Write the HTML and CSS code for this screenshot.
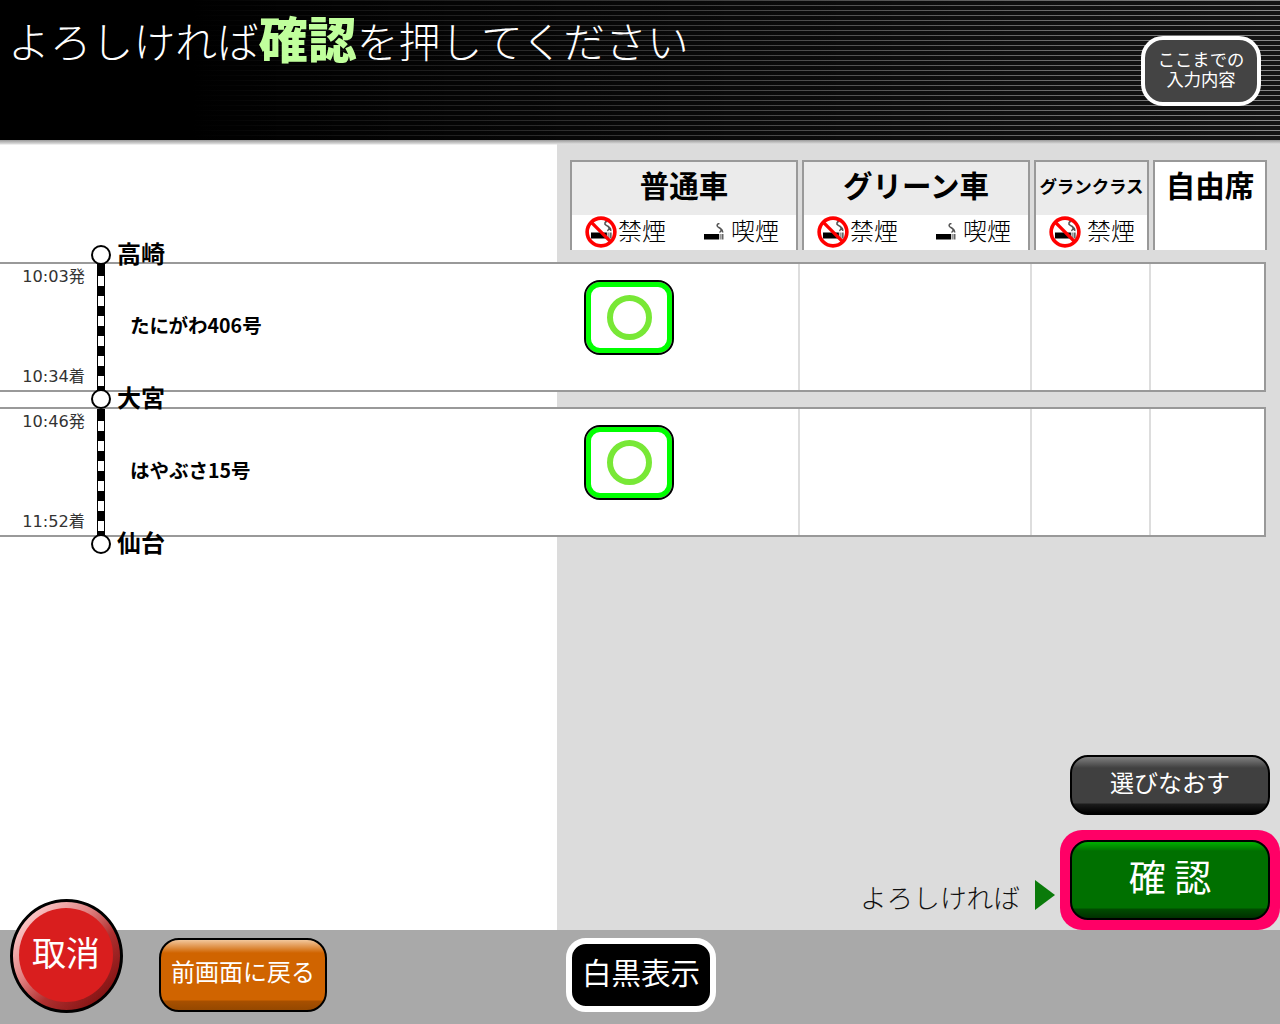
FILE: index.html
```html
<!DOCTYPE html>
<html lang="ja">
<head>
<meta charset="utf-8">
<title>確認</title>
<link rel="stylesheet" href="styles.css">
</head>
<body>
<svg class="defs" width="0" height="0" aria-hidden="true">
  <symbol id="cig" viewBox="0 0 20 18">
    <path d="M0 11h15v5.500H0z" fill="#000"/>
    <path d="M15.500 11h1.500v5.500h-1.500z" fill="#999"/>
    <path d="M17.500 11h2v5.500h-2z" fill="#666"/>
    <path d="M15.500 9.500c3-2.500 1.500-4-1-5.200-2.300-1.200-1.500-3.800 1-3.800M18.500 9.500c.8-2.500-1.500-3.500-3-4.800" fill="none" stroke="#555" stroke-width="1.500"/>
  </symbol>
  <symbol id="nosmoke" viewBox="0 0 30 30">
    <use href="#cig" x="5.500" y="4.500" width="20" height="18"/>
    <circle cx="15" cy="15" r="13" fill="none" stroke="#f00" stroke-width="3.400"/>
    <path d="M6 6l18 18" stroke="#f00" stroke-width="3.200"/>
  </symbol>
</svg>
<div class="page">
  <header class="top">
    <h1 class="title">よろしければ<b>確認</b>を押してください</h1>
    <button class="summary">ここまでの<br>入力内容</button>
  </header>
  <main class="main">
    <div class="columns">
      <div class="col col-std">
        <div class="col-name">普通車</div>
        <div class="col-sub">
          <span class="smoke"><svg class="ico-no"><use href="#nosmoke"/></svg><span class="smoke-text">禁煙</span></span>
          <span class="smoke"><svg class="ico-cig"><use href="#cig"/></svg><span class="smoke-text">喫煙</span></span>
        </div>
      </div>
      <div class="col col-std">
        <div class="col-name">グリーン車</div>
        <div class="col-sub">
          <span class="smoke"><svg class="ico-no"><use href="#nosmoke"/></svg><span class="smoke-text">禁煙</span></span>
          <span class="smoke"><svg class="ico-cig"><use href="#cig"/></svg><span class="smoke-text">喫煙</span></span>
        </div>
      </div>
      <div class="col col-gran">
        <div class="col-name col-name-small">グランクラス</div>
        <div class="col-sub col-sub-single">
          <span class="smoke"><svg class="ico-no ico-no-wide"><use href="#nosmoke"/></svg><span class="smoke-text">禁煙</span></span>
        </div>
      </div>
      <div class="col col-free">
        <div class="col-name col-name-free">自由席</div>
      </div>
    </div>
    <div class="board">
      <div class="row">
        <div class="cell cell-route">
          <div class="times"><span>10:03発</span><span>10:34着</span></div>
          <div class="bar"></div>
          <div class="train">たにがわ406号</div>
          <div class="seat"><span class="ring"></span></div>
        </div>
        <div class="cell cell-green"></div>
        <div class="cell cell-gran"></div>
        <div class="cell cell-free"></div>
      </div>
      <div class="row">
        <div class="cell cell-route">
          <div class="times"><span>10:46発</span><span>11:52着</span></div>
          <div class="bar"></div>
          <div class="train">はやぶさ15号</div>
          <div class="seat"><span class="ring"></span></div>
        </div>
        <div class="cell cell-green"></div>
        <div class="cell cell-gran"></div>
        <div class="cell cell-free"></div>
      </div>
      <div class="station st1"><i class="dot"></i><span class="st-name">高崎</span></div>
      <div class="station st2"><i class="dot"></i><span class="st-name">大宮</span></div>
      <div class="station st3"><i class="dot"></i><span class="st-name">仙台</span></div>
    </div>
    <div class="actions">
      <button class="btn btn-redo">選びなおす</button>
      <div class="confirm-line">
        <span class="confirm-label">よろしければ</span>
        <span class="arrow"></span>
        <div class="confirm-frame"><button class="btn btn-confirm">確 認</button></div>
      </div>
    </div>
  </main>
  <footer class="foot">
    <button class="cancel"><span class="cancel-face">取消</span></button>
    <button class="btn btn-back">前画面に戻る</button>
    <button class="mono">白黒表示</button>
  </footer>
</div>
</body>
</html>
```
FILE: styles.css
```css
* { box-sizing: border-box; }
html, body { margin: 0; padding: 0; }
body {
  width: 1280px;
  height: 1024px;
  overflow: hidden;
  font-family: "Noto Sans CJK JP", "Noto Sans", sans-serif;
  color: #000;
}
button { font-family: inherit; padding: 0; cursor: pointer; }
.defs { position: absolute; }
.page { display: flex; flex-direction: column; height: 1024px; }

/* top bar */
.top {
  height: 140px;
  flex: none;
  display: flex;
  justify-content: space-between;
  align-items: flex-start;
  padding: 36px 19px 0 8px;
  background:
    linear-gradient(to right, #000 15%, rgba(0,0,0,.2) 85%, rgba(0,0,0,0) 100%),
    repeating-linear-gradient(to bottom, #8a8a8a 0, #8a8a8a 1px, #141414 1px, #141414 5px);
}
.title {
  margin: -29px 0 0;
  font-size: 41.800px;
  line-height: 60px;
  font-weight: 300;
  color: #fff;
  white-space: nowrap;
}
.title b { font-size: 49px; font-weight: 900; color: #c0ff9c; }
.summary {
  width: 120px;
  height: 70px;
  padding-bottom: 4px;
  border: 4px solid #fff;
  border-radius: 22px;
  background: #444;
  color: #fff;
  font-size: 17.300px;
  line-height: 20px;
  font-weight: 400;
}

/* main */
.main {
  flex: 1;
  display: flex;
  flex-direction: column;
  background:
    linear-gradient(to bottom, #999 0, #ddd 4px, rgba(221,221,221,0) 5px) top left / 100% 5px no-repeat,
    linear-gradient(to right, #fff 557px, #dcdcdc 557px);
}
.columns {
  display: flex;
  gap: 4px;
  margin: 20px 0 0 570px;
  height: 90px;
  flex: none;
}
.col {
  border: 2px solid #999;
  border-bottom: 0;
  background: #fff;
  display: flex;
  flex-direction: column;
}
.col-std { width: 228px; }
.col-gran { width: 115px; }
.col-free { width: 114px; }
.col-name {
  height: 53px;
  background: #ebebeb;
  font-size: 29.500px;
  font-weight: 700;
  line-height: 44px;
  text-align: center;
  white-space: nowrap;
}
.col-name-small { font-size: 17.500px; line-height: 48px; letter-spacing: -.1px; }
.col-name-free { background: #fff; }
.col-sub {
  display: flex;
  justify-content: space-between;
  align-items: center;
  height: 35px;
  padding: 0 17px 0 13px;
}
.col-sub-single { justify-content: flex-start; padding-right: 0; }
.smoke {
  display: flex;
  align-items: center;
  font-size: 24px;
  line-height: 32px;
  font-weight: 300;
  white-space: nowrap;
}
.smoke-text { margin-bottom: 5px; }
.ico-no { width: 32px; height: 32px; margin: 0 1px 2px 0; }
.ico-no-wide { margin-right: 6px; }
.ico-cig { width: 20px; height: 18px; margin: 0 7px 2px 0; }

/* rows */
.board {
  position: relative;
  margin-top: 12px;
  width: 1266px;
  display: flex;
  flex-direction: column;
  gap: 15px;
  flex: none;
}
.row {
  height: 130px;
  display: grid;
  grid-template-columns: 800px 232px 119px 1fr;
  background: #fff;
  border: 2px solid #999;
  border-left: 0;
}
.cell { border-right: 2px solid #ddd; }
.cell-free { border-right: 0; }
.cell-route { display: flex; }
.times {
  width: 85px;
  flex: none;
  padding: 2px 0 2px;
  display: flex;
  flex-direction: column;
  justify-content: space-between;
  text-align: right;
  font-size: 16.200px;
  line-height: 22px;
  color: #333;
  font-family: "DejaVu Sans", "Noto Sans CJK JP", sans-serif;
}
.bar {
  width: 8px;
  flex: none;
  margin-left: 12px;
  border-left: 1px solid #000;
  border-right: 1px solid #000;
  background: repeating-linear-gradient(to bottom, #000 0, #000 10px, #fff 10px, #fff 20px) 0 2px;
}
.train {
  width: 479px;
  flex: none;
  padding-left: 25px;
  font-size: 19.500px;
  font-weight: 700;
  line-height: 121px;
  white-space: nowrap;
}
.seat {
  width: 90px;
  height: 75px;
  flex: none;
  margin-top: 16px;
  display: flex;
  align-items: center;
  justify-content: center;
  background: #fff;
  border: 2px solid #000;
  border-radius: 16px;
  box-shadow: inset 0 0 0 5px #0f0;
}
.ring {
  width: 45px;
  height: 45px;
  border: 6px solid #78e836;
  border-radius: 50%;
}

/* stations: nodes of the route diagram */
.station {
  position: absolute;
  left: 91px;
  display: flex;
  align-items: center;
  height: 24px;
  font-size: 24px;
  line-height: 24px;
  font-weight: 700;
}
.st-name { margin-bottom: 4px; }
.dot {
  width: 20px;
  height: 20px;
  margin-right: 6px;
  border: 2px solid #000;
  border-radius: 50%;
  background: #fff;
}
.st1 { top: -19px; }
.st2 { top: 125px; }
.st3 { top: 270px; }

/* action buttons */
.actions {
  margin-top: auto;
  display: flex;
  flex-direction: column;
  align-items: flex-end;
  gap: 15px;
}
.btn {
  display: block;
  border: 2px solid #000;
  color: #fff;
}
.btn-redo {
  width: 200px;
  height: 60px;
  padding-bottom: 8px;
  margin-right: 10px;
  border-radius: 18px;
  font-size: 24px;
  font-weight: 400;
  background: linear-gradient(to bottom, #808080 0, #404040 11px, #404040 46px, #1c1c1c 47px, #000 100%);
}
.confirm-line { display: flex; align-items: flex-end; }
.confirm-label {
  font-size: 26.700px;
  line-height: 36px;
  font-weight: 300;
  margin-bottom: 15px;
  color: #111;
  white-space: nowrap;
}
.arrow {
  width: 0;
  height: 0;
  margin: 0 5px 20px 15px;
  border-left: 20px solid #0a7a0a;
  border-top: 15px solid transparent;
  border-bottom: 15px solid transparent;
}
.confirm-frame {
  width: 220px;
  height: 100px;
  padding: 10px;
  background: #ff0066;
  border-radius: 22px;
}
.btn-confirm {
  width: 200px;
  height: 80px;
  padding-bottom: 8px;
  border-radius: 18px;
  font-size: 37px;
  font-weight: 400;
  background: linear-gradient(to bottom, #00b000 0, #007000 9px, #007000 66px, #004c00 67px, #003000 100%);
}

/* footer */
.foot {
  height: 94px;
  flex: none;
  position: relative;
  display: flex;
  align-items: flex-start;
  background: #a9a9a9;
  padding: 8px 0 0 159px;
}
.cancel {
  position: absolute;
  left: 10px;
  top: -31px;
  width: 113px;
  height: 114px;
  border: 3px solid #000;
  border-radius: 50%;
  background: linear-gradient(135deg, #ffd0d0 10%, #e08080 40%, #b03030 60%, #801010 90%);
  display: flex;
  align-items: center;
  justify-content: center;
}
.cancel-face {
  width: 94px;
  height: 94px;
  border-radius: 50%;
  background: #d91e1e;
  color: #fff;
  font-size: 34px;
  font-weight: 400;
  line-height: 88px;
  display: block;
  margin: -2px 0 0 -1px;
}
.btn-back {
  width: 168px;
  height: 74px;
  padding-bottom: 10px;
  border-radius: 20px;
  font-size: 24px;
  font-weight: 400;
  background: linear-gradient(to bottom, #f2c79c 0, #d06400 13px, #d06400 60px, #a85000 61px, #954800 100%);
}
.mono {
  width: 150px;
  height: 74px;
  padding-bottom: 8px;
  margin-left: 239px;
  border: 6px solid #fff;
  border-radius: 20px;
  background: #000;
  color: #fff;
  font-size: 29.500px;
  font-weight: 400;
}
```
